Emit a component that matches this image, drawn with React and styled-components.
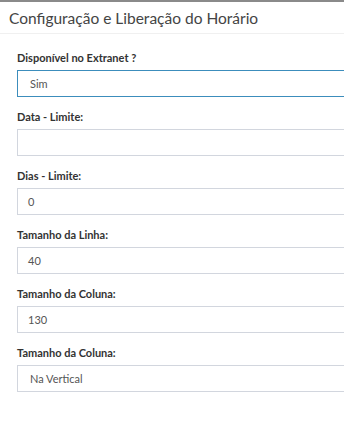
import styled, { createGlobalStyle } from "styled-components";

const Global = createGlobalStyle`
	html, body {
		margin: 0;
		padding: 0;
		background: #fff;
		overflow: hidden;
		font-family: Lato, "Noto Sans", sans-serif;
	}
`

const Box = styled.div`
	width: 390px;
	border-top: 2px solid #8a8a8a;
	background: #fff;
`

const Header = styled.div`
	height: 31px;
	padding: 0 9px;
	display: flex;
	align-items: center;
	border-bottom: 1px solid #f0f0f0;
	font-size: 15.5px;
	color: #444;
`

const Body = styled.div`
	padding: 16px 17px;
	display: grid;
	gap: 12px;
`

const Group = styled.div`
	display: flex;
	flex-direction: column;
	gap: 4px;
`

const Label = styled.label`
	font-size: 11px;
	font-weight: 700;
	color: #333;
	line-height: 16px;
`

const Field = styled.div`
	height: 27px;
	box-sizing: border-box;
	border: 1px solid ${p => p.$focus ? "#3c8dbc" : "#d2d6de"};
	padding: 0 ${p => p.$select ? 12 : 10}px;
	display: flex;
	align-items: center;
	font-size: 11px;
	color: #555;
`

const fields = [
	{ label: "Disponível no Extranet ?", value: "Sim", select: true, focus: true },
	{ label: "Data - Limite:", value: "" },
	{ label: "Dias - Limite:", value: "0" },
	{ label: "Tamanho da Linha:", value: "40" },
	{ label: "Tamanho da Coluna:", value: "130" },
	{ label: "Tamanho da Coluna:", value: "Na Vertical", select: true },
]

const App = () => {
	return (
		<>
			<Global />
			<Box>
				<Header>Configuração e Liberação do Horário</Header>
				<Body>
					{fields.map((f, i) => (
						<Group key={i}>
							<Label>{f.label}</Label>
							<Field $select={f.select} $focus={f.focus}>{f.value}</Field>
						</Group>
					))}
				</Body>
			</Box>
		</>
	)
}

export default App
